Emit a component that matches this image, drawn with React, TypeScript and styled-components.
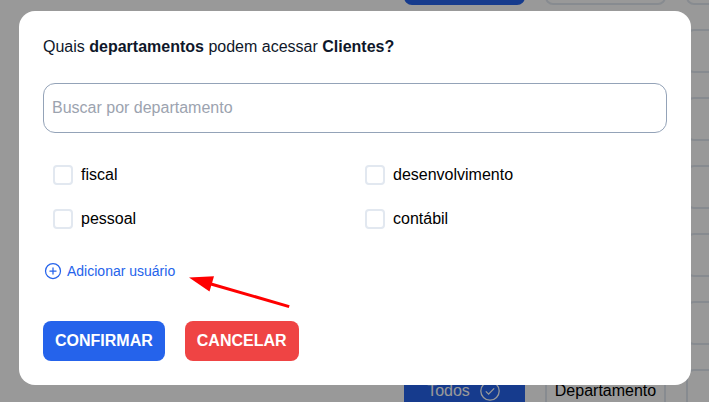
import React from "react";
import styled, { createGlobalStyle } from "styled-components";

const GlobalStyle = createGlobalStyle`
  *, *::before, *::after { box-sizing: border-box; }
  body {
    margin: 0;
    height: 100vh;
    overflow: hidden;
    background: #fff;
    color: #000;
    font: 16px/24px "Liberation Sans", Arial, sans-serif;
  }
  button, input { font: inherit; }
`;

const Page = styled.div`
  height: 100vh;
  overflow: hidden;
`;

const OptionGrid = styled.div`
  display: grid;
  grid-template-columns: repeat(3, 121px);
  grid-auto-rows: 44px;
  gap: 24px 20px;
  margin: -39px 0 0 404px;
`;

const Option = styled.div<{ $active?: boolean }>`
  display: flex;
  align-items: center;
  justify-content: center;
  gap: 10px;
  padding-right: ${(p) => (p.$active ? "2px" : "0")};
  border-radius: 8px;
  border: 2px solid ${(p) => (p.$active ? "#2563eb" : "#e2e8f0")};
  background: ${(p) => (p.$active ? "#2563eb" : "#fff")};
  color: ${(p) => (p.$active ? "#fff" : "#000")};
`;

const Overlay = styled.div`
  position: fixed;
  inset: 0;
  display: flex;
  align-items: flex-start;
  justify-content: center;
  padding: 11px 18px 0 19px;
  background: rgba(0, 0, 0, 0.4);
`;

const Modal = styled.section`
  width: 672px;
  height: 374px;
  padding: 24px;
  border-radius: 16px;
  background: #fff;
`;

const Title = styled.h2`
  margin: 0 0 24px;
  font-size: 16px;
  font-weight: 400;
  color: #0f172a;
`;

const Search = styled.input`
  display: block;
  width: 100%;
  height: 50px;
  padding: 0 8px;
  border: 1px solid #94a3b8;
  border-radius: 12px;
  background: #fff;
  outline: none;
  &::placeholder { color: #9ca3af; opacity: 1; }
`;

const CheckGrid = styled.div`
  display: grid;
  grid-template-columns: 1fr 1fr;
  grid-auto-rows: 44px;
  margin-top: 20px;
`;

const CheckLabel = styled.label`
  display: flex;
  align-items: center;
  gap: 8px;
  padding-left: 10px;
`;

const CheckBox = styled.input`
  appearance: none;
  width: 20px;
  height: 20px;
  margin: 0;
  border: 2px solid #e2e8f0;
  border-radius: 4px;
  background: #fff;
`;

const AddRow = styled.div`
  display: flex;
  align-items: center;
  gap: 14px;
  height: 40px;
  margin-top: 18px;
`;

const AddLink = styled.button`
  display: flex;
  align-items: center;
  gap: 4px;
  padding: 0;
  margin-top: -16px;
  border: 0;
  background: none;
  color: #2563eb;
  font-size: 14px;
  line-height: 20px;
`;

const Arrow = styled.svg`
  width: 104px;
  height: 34px;
  margin-top: 22px;
  overflow: visible;
`;

const Actions = styled.div`
  display: flex;
  gap: 20px;
  margin-top: 22px;
`;

const ActionButton = styled.button<{ $color: string }>`
  height: 40px;
  padding: 0 12px;
  border: 0;
  border-radius: 8px;
  background: ${(p) => p.$color};
  color: #fff;
  font-weight: 700;
  text-transform: uppercase;
`;

const blankRows = [0, 1, 2, 3, 4, 5];
const departments = ["fiscal", "desenvolvimento", "pessoal", "contábil"];

const CheckCircleIcon = () => (
  <svg width="20" height="20" viewBox="0 0 20 20" fill="none" stroke="currentColor" strokeWidth="1.3">
    <circle cx="10" cy="10" r="9.2" />
    <path d="M5.8 10.4 8.6 13.1 14.2 7.4" />
  </svg>
);

const PlusCircleIcon = () => (
  <svg width="20" height="20" viewBox="0 0 20 20" fill="none" stroke="currentColor" strokeWidth="1.25" strokeLinecap="round">
    <circle cx="10" cy="10" r="7.5" />
    <path d="M10 6.9v6.2M6.9 10h6.2" />
  </svg>
);

export default function App() {
  return (
    <>
      <GlobalStyle />
      <Page>
        <OptionGrid>
          {blankRows.map((row) => (
            <React.Fragment key={row}>
              <Option $active />
              <Option />
              <Option />
            </React.Fragment>
          ))}
          <Option $active>
            Todos <CheckCircleIcon />
          </Option>
          <Option>Departamento</Option>
          <Option />
        </OptionGrid>
      </Page>
      <Overlay>
        <Modal role="dialog">
          <Title>
            Quais <b>departamentos</b> podem acessar <b>Clientes?</b>
          </Title>
          <Search placeholder="Buscar por departamento" />
          <CheckGrid>
            {departments.map((name) => (
              <CheckLabel key={name}>
                <CheckBox type="checkbox" />
                {name}
              </CheckLabel>
            ))}
          </CheckGrid>
          <AddRow>
            <AddLink>
              <PlusCircleIcon />
              Adicionar usuário
            </AddLink>
            <Arrow viewBox="0 0 104 34">
              <path d="M22 11 100.2 33.6" fill="none" stroke="#f00" strokeWidth="3" />
              <path d="M0 4.5 25 3.3 20.5 18.5Z" fill="#f00" />
            </Arrow>
          </AddRow>
          <Actions>
            <ActionButton $color="#2563eb">Confirmar</ActionButton>
            <ActionButton $color="#ef4444">Cancelar</ActionButton>
          </Actions>
        </Modal>
      </Overlay>
    </>
  );
}
